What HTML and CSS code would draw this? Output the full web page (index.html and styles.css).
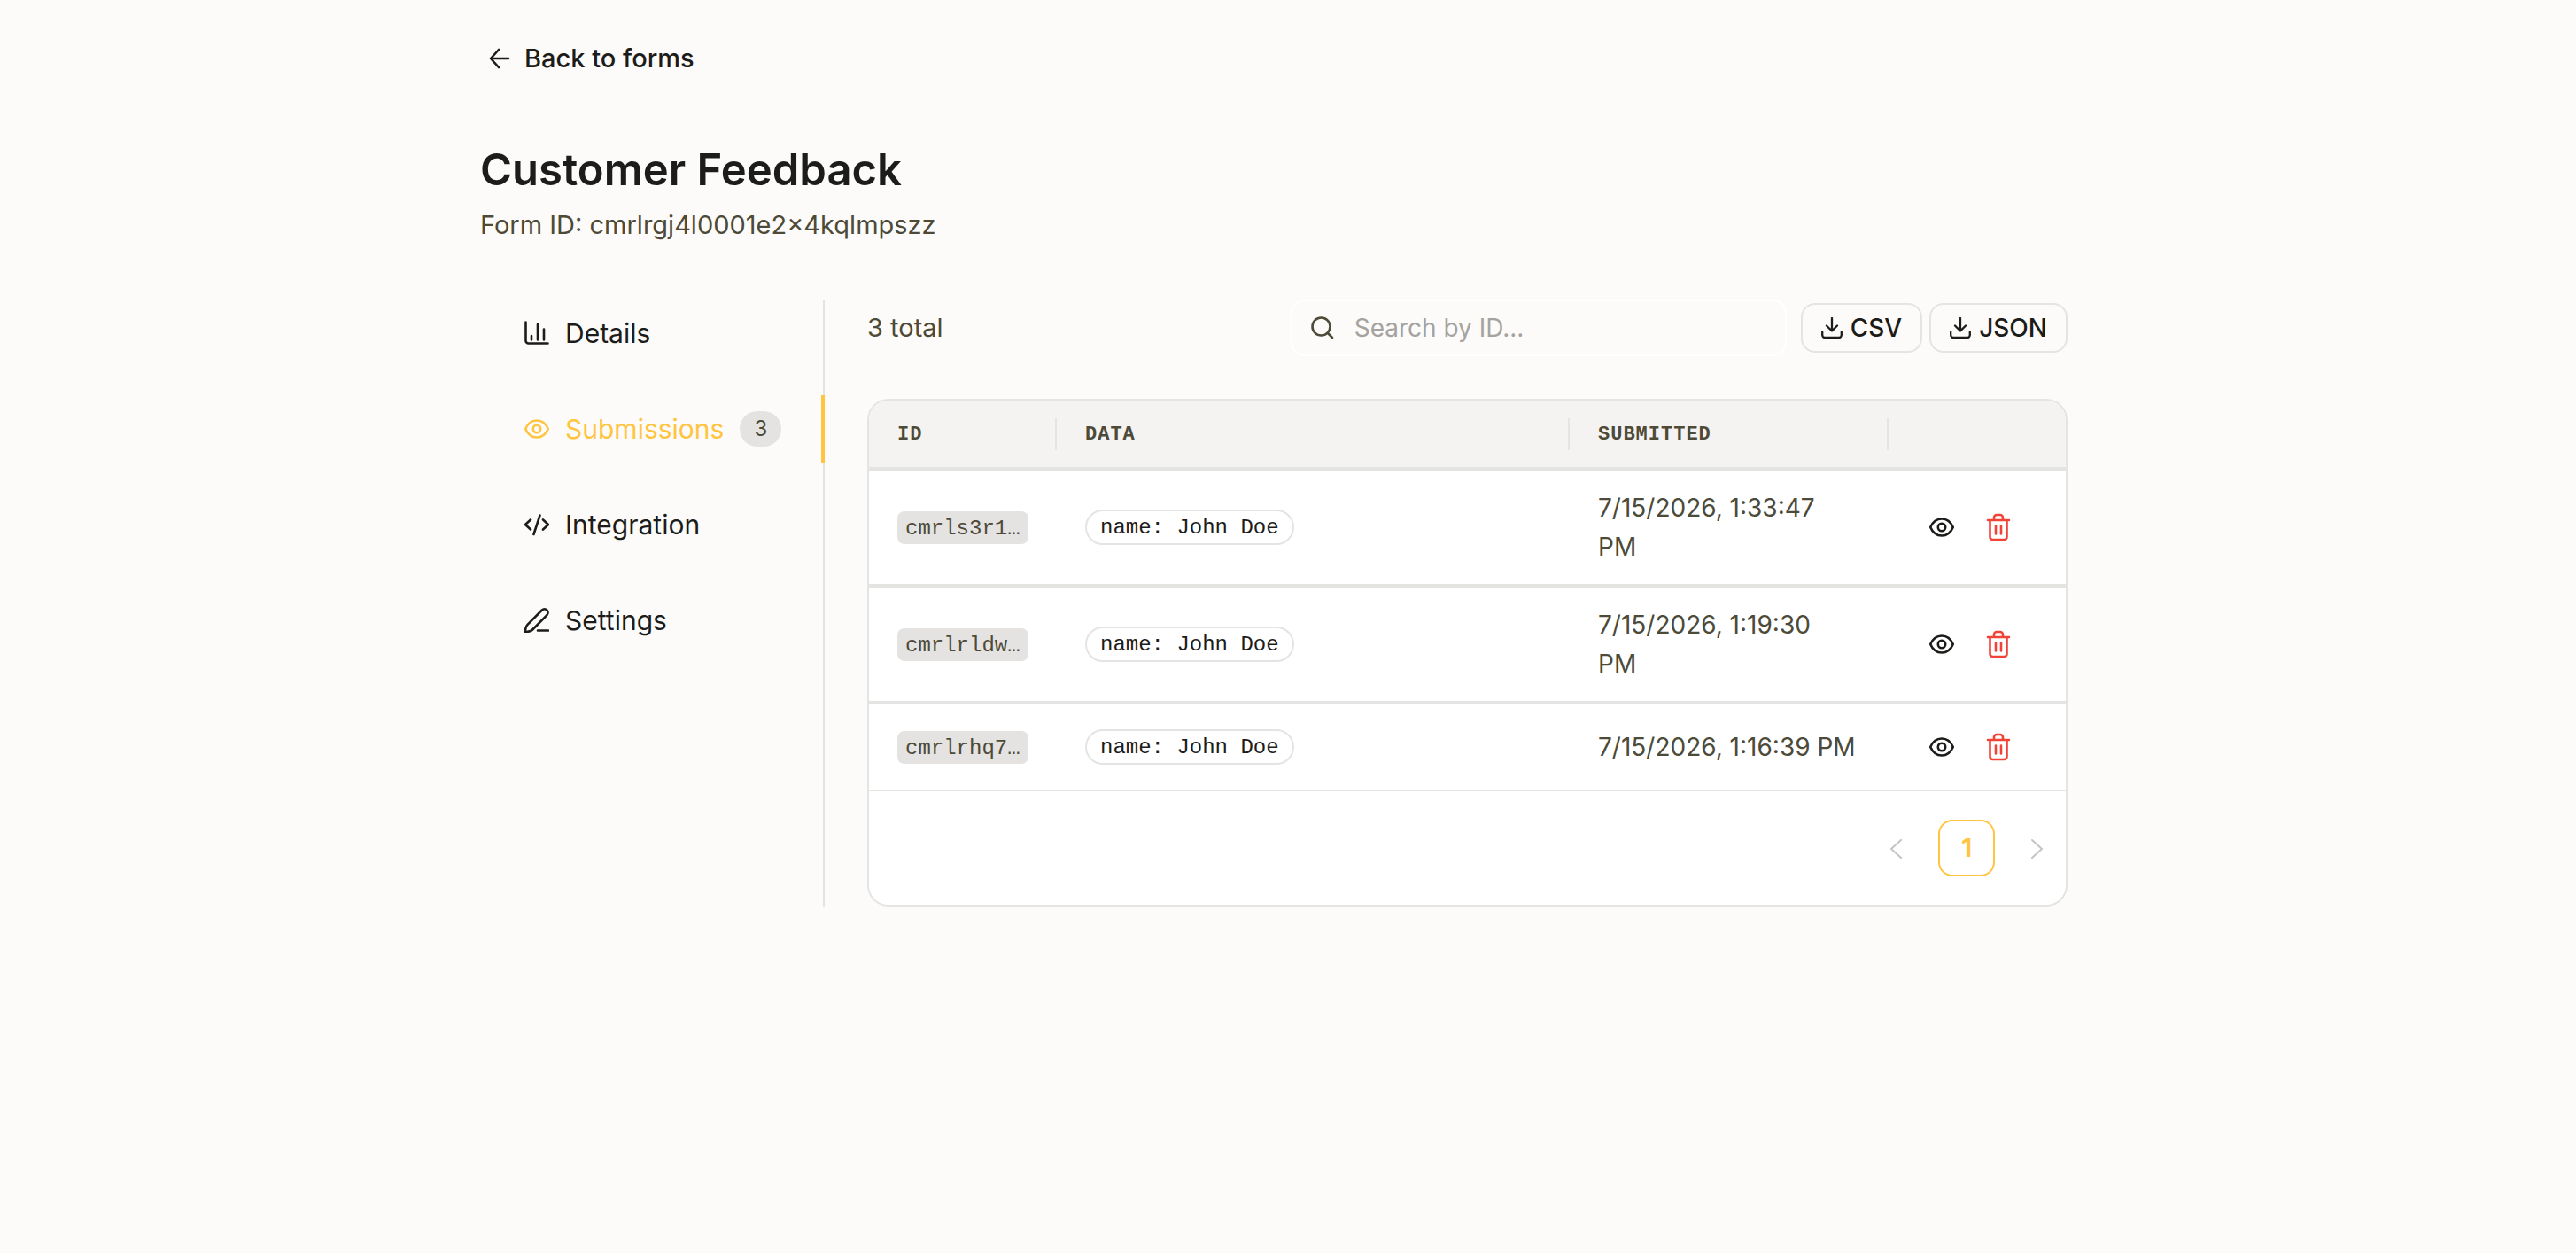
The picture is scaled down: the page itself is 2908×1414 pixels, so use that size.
FILE: index.html
```html
<!DOCTYPE html>
<html lang="en">
<head>
<meta charset="utf-8">
<title>Customer Feedback</title>
<link rel="stylesheet" href="styles.css">
</head>
<body>
<svg class="sprite" aria-hidden="true">
  <symbol id="arrow" viewBox="0 0 28 28"><path d="M24 14H4M13 4L4 14l9 10"/></symbol>
  <symbol id="chart" viewBox="0 0 28 28"><path d="M1.500 1.500v21a3 3 0 0 0 3 3h22M8 17v4.500M15 4v17.500M22 9.500v12"/></symbol>
  <symbol id="eye" viewBox="0 0 28 28"><path d="M1.200 14C4 7.500 8.500 4.500 14 4.500S24 7.500 26.800 14C24 20.500 19.500 23.500 14 23.500S4 20.500 1.200 14z"/><circle cx="14" cy="14" r="4.200"/></symbol>
  <symbol id="code" viewBox="0 0 28 28"><path d="M7 8.500L1 14l6 5.500M21 8.500l6 5.500-6 5.500M17.500 3.500l-7 21.500"/></symbol>
  <symbol id="pen" viewBox="0 0 28 28"><path d="M1 27c0-3.500.4-6 2.500-8.200L19.800 2.500a3.900 3.900 0 0 1 5.600 5.600L9.200 24.500C7.200 26.500 4.500 27 1 27zM15 25.500h12"/></symbol>
  <symbol id="search" viewBox="0 0 28 28"><circle cx="12.500" cy="12.500" r="10"/><path d="M20 20l5 5"/></symbol>
  <symbol id="download" viewBox="0 0 24 24"><path d="M12 1v14M6 9.500l6 6 6-6M1.200 16.500V20a3 3 0 0 0 3 3h15.600a3 3 0 0 0 3-3v-3.500"/></symbol>
  <symbol id="trash" viewBox="0 0 28 32"><path d="M2 8h24M9 8V5a3 3 0 0 1 3-3h4a3 3 0 0 1 3 3v3M4.500 8v19a3 3 0 0 0 3 3h13a3 3 0 0 0 3-3V8M11 14.500v9M17 14.500v9"/></symbol>
  <symbol id="prev" viewBox="0 0 20 24"><path d="M16 3L5 13l11 10"/></symbol>
  <symbol id="next" viewBox="0 0 20 24"><path d="M4 3l11 10L4 23"/></symbol>
</svg>
<main class="page">
  <a class="back" href="#"><svg class="icon"><use href="#arrow"/></svg>Back to forms</a>
  <header class="heading">
    <h1 class="title">Customer Feedback</h1>
    <p class="subtitle">Form ID: cmrlrgj4l0001e2x4kqlmpszz</p>
  </header>
  <div class="layout">
    <nav class="tabs">
      <a class="tab" href="#"><svg class="icon"><use href="#chart"/></svg>Details</a>
      <a class="tab tab-active" href="#" aria-current="page"><svg class="icon"><use href="#eye"/></svg>Submissions<span class="count">3</span></a>
      <a class="tab" href="#"><svg class="icon"><use href="#code"/></svg>Integration</a>
      <a class="tab" href="#"><svg class="icon"><use href="#pen"/></svg>Settings</a>
    </nav>
    <section class="content">
      <div class="toolbar">
        <p class="total">3 total</p>
        <label class="search"><svg class="icon"><use href="#search"/></svg><input class="search-input" type="text" placeholder="Search by ID..." aria-label="Search by ID"></label>
        <div class="exports">
          <button class="export" type="button"><svg class="icon"><use href="#download"/></svg>CSV</button>
          <button class="export" type="button"><svg class="icon"><use href="#download"/></svg>JSON</button>
        </div>
      </div>
      <div class="card">
        <table class="table">
          <colgroup><col class="col-id"><col><col class="col-date"><col class="col-actions"></colgroup>
          <thead>
            <tr><th><div class="head">ID</div></th><th><div class="head">DATA</div></th><th><div class="head">SUBMITTED</div></th><th aria-label="Actions"></th></tr>
          </thead>
          <tbody>
            <tr>
              <td><code class="id">cmrls3r1…</code></td>
              <td><span class="tag">name: John Doe</span></td>
              <td>7/15/2026, 1:33:47<br>PM</td>
              <td><div class="actions"><button class="action" type="button" aria-label="View"><svg class="icon"><use href="#eye"/></svg></button><button class="action danger" type="button" aria-label="Delete"><svg class="icon"><use href="#trash"/></svg></button></div></td>
            </tr>
            <tr>
              <td><code class="id">cmrlrldw…</code></td>
              <td><span class="tag">name: John Doe</span></td>
              <td>7/15/2026, 1:19:30<br>PM</td>
              <td><div class="actions"><button class="action" type="button" aria-label="View"><svg class="icon"><use href="#eye"/></svg></button><button class="action danger" type="button" aria-label="Delete"><svg class="icon"><use href="#trash"/></svg></button></div></td>
            </tr>
            <tr>
              <td><code class="id">cmrlrhq7…</code></td>
              <td><span class="tag">name: John Doe</span></td>
              <td>7/15/2026, 1:16:39 PM</td>
              <td><div class="actions"><button class="action" type="button" aria-label="View"><svg class="icon"><use href="#eye"/></svg></button><button class="action danger" type="button" aria-label="Delete"><svg class="icon"><use href="#trash"/></svg></button></div></td>
            </tr>
          </tbody>
        </table>
        <div class="pager">
          <button class="page-button" type="button" aria-label="Previous page" disabled><svg class="icon"><use href="#prev"/></svg></button>
          <button class="page-button page-current" type="button" aria-current="page">1</button>
          <button class="page-button" type="button" aria-label="Next page" disabled><svg class="icon"><use href="#next"/></svg></button>
        </div>
      </div>
    </section>
  </div>
</main>
</body>
</html>
```
FILE: styles.css
```css
:root {
  --ink: #1c1c1a;
  --muted: #4d4a38;
  --line: #e4e4e2;
  --accent: #ffc440;
}
* { box-sizing: border-box; }
body {
  margin: 0;
  padding: 36px 64px 36px 32px;
  background: #fcfbf9;
  color: var(--ink);
  font: 28px/44px Inter, "Liberation Sans", sans-serif;
}
button, input { font: inherit; color: inherit; }
h1, p { margin: 0; }
a { color: inherit; text-decoration: none; }
.sprite { display: none; }
.icon {
  flex: none;
  width: 28px;
  height: 28px;
  fill: none;
  stroke: currentColor;
  stroke-width: 2.6;
  stroke-linecap: round;
  stroke-linejoin: round;
}
.page { max-width: 1792px; margin: 0 auto; }
.back {
  display: inline-flex;
  align-items: center;
  gap: 14px;
  height: 60px;
  padding-left: 8px;
  font-size: 29px;
  font-weight: 500;
}
.heading { padding-top: 64px; }
.title { font-size: 49px; line-height: 64px; font-weight: 600; }
.subtitle { margin-top: 8px; color: var(--muted); font-size: 29px; }
.layout { display: flex; margin-top: 62px; }
.tabs {
  flex: none;
  display: flex;
  flex-direction: column;
  gap: 32px;
  width: 389px;
  border-right: 2px solid var(--line);
}
.tab {
  display: flex;
  align-items: center;
  height: 76px;
  margin-right: -2px;
  padding-left: 50px;
  border-right: 4px solid transparent;
  font-size: 30px;
}
.tab .icon { margin-right: 18px; }
.tab-active { color: var(--accent); border-right-color: var(--accent); }
.count {
  min-width: 47px;
  margin-left: 18px;
  border-radius: 20px;
  background: #e5e3e1;
  color: var(--muted);
  font-size: 24px;
  line-height: 40px;
  text-align: center;
}
.content { flex: 1; min-width: 0; padding-left: 48px; }
.toolbar { display: flex; align-items: center; height: 64px; }
.total { flex: 1; color: var(--muted); font-size: 29px; }
.search {
  display: flex;
  align-items: center;
  gap: 22px;
  width: 560px;
  height: 64px;
  padding: 0 20px;
  border: 2px solid #fff;
  border-radius: 16px;
}
.search .icon { color: var(--muted); }
.search-input {
  flex: 1;
  min-width: 0;
  padding: 0;
  border: 0;
  outline: 0;
  background: none;
}
.search-input::placeholder { color: #a5a3a0; opacity: 1; }
.exports { display: flex; gap: 8px; margin-left: 16px; }
.export {
  display: flex;
  align-items: center;
  gap: 9px;
  height: 56px;
  padding: 0 21px;
  border: 2px solid var(--line);
  border-radius: 16px;
  background: none;
  font-weight: 500;
}
.export .icon { width: 24px; height: 24px; stroke-width: 2.3; }
.card {
  margin-top: 48px;
  overflow: hidden;
  border: 2px solid var(--line);
  border-radius: 24px;
  background: #fff;
}
.table { width: 100%; table-layout: fixed; border-collapse: separate; border-spacing: 0; }
.col-id { width: 212px; }
.col-date { width: 360px; }
.col-actions { width: 200px; }
th {
  height: 79px;
  padding: 0;
  background: #f4f3f1;
  border-bottom: 4px solid var(--line);
  text-align: left;
}
.head {
  padding: 2px 0 0 32px;
  border-right: 2px solid var(--line);
  color: var(--muted);
  font: bold 22px/34px "Liberation Mono", monospace;
  letter-spacing: 1px;
}
td {
  padding: 20px 0 20px 32px;
  border-bottom: 4px solid var(--line);
  color: var(--muted);
}
tr:last-child td { border-bottom-width: 2px; }
.id, .tag {
  display: block;
  width: fit-content;
  font: 24px/34px "Liberation Mono", monospace;
}
.id { padding: 3px 9px 0; border-radius: 8px; background: #e5e3e1; }
.tag { padding: 2px 15px 0; border: 2px solid var(--line); border-radius: 20px; color: var(--ink); }
.actions { display: flex; gap: 8px; }
.action {
  display: grid;
  place-items: center;
  width: 56px;
  height: 56px;
  padding: 0;
  border: 0;
  background: none;
  color: var(--ink);
}
.danger { color: #f04438; }
.danger .icon { height: 32px; }
.pager { display: flex; justify-content: flex-end; gap: 16px; padding: 32px 0; }
.page-button {
  display: grid;
  place-items: center;
  width: 64px;
  height: 64px;
  padding: 0;
  border: 0;
  border-radius: 16px;
  background: none;
}
.page-button:disabled { color: #c4c4c2; }
.page-button .icon { width: 20px; height: 24px; stroke-width: 2; }
.page-current { border: 2px solid var(--accent); color: var(--accent); font-weight: 700; }
```
